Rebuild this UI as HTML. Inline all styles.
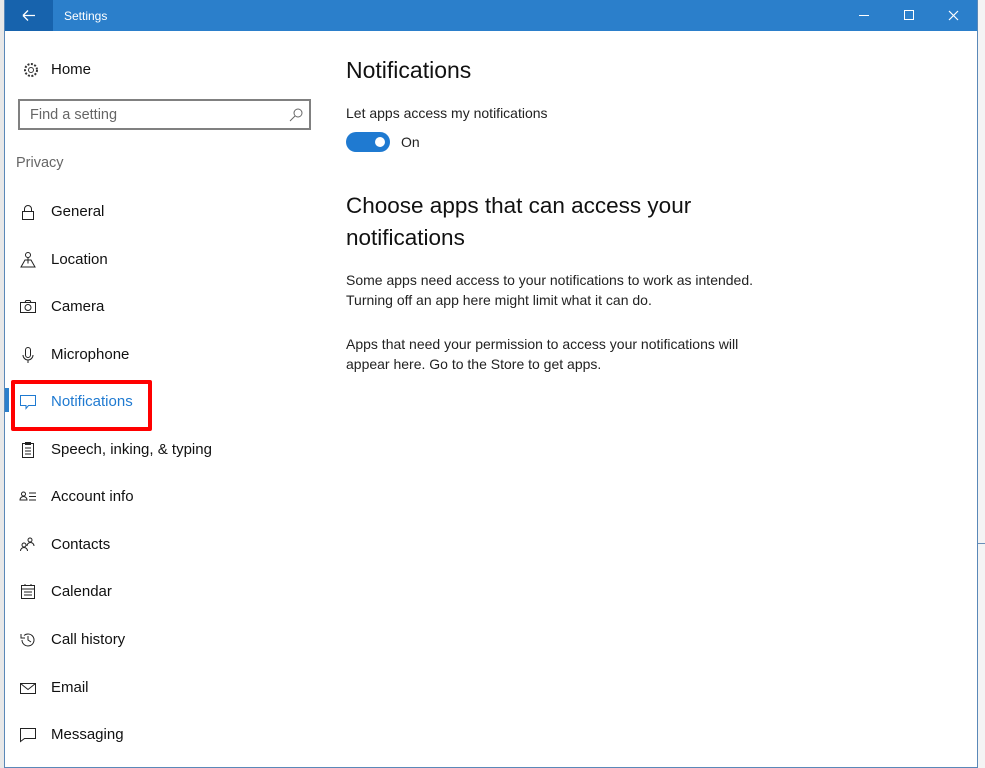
<!DOCTYPE html>
<html><head><meta charset="utf-8"><style>
*{margin:0;padding:0;box-sizing:border-box}
body{width:985px;height:768px;background:linear-gradient(90deg,#e8e8e8,#f4f4f4);font-family:"Liberation Sans",sans-serif;position:relative;overflow:hidden;color:#000}
.win{position:absolute;left:4px;top:0;width:974px;height:768px;background:#fff;border:1px solid #5a88b8;border-top:none}
.tb{position:absolute;left:0;top:0;width:100%;height:31px;background:#2b7fcb}
.back{position:absolute;left:0;top:0;width:48px;height:31px;background:#1763ad}
.tt{position:absolute;left:59px;top:9px;color:#fff;font-size:12px}
.nav{position:absolute;left:46px;font-size:15px;color:#111;margin-top:2px}
.ic{position:absolute;left:14px;width:18px;height:18px;margin-top:2px}
.t{position:absolute;font-size:14px;color:#222;line-height:20px}
</style></head><body>
<div class="win">
<div class="tb"><div class="back"><svg width="48" height="31"><path d="M18 15.5h12M18 15.5l5-5M18 15.5l5 5" stroke="#fff" stroke-width="1.3" fill="none"/></svg></div>
<div class="tt">Settings</div>
<svg style="position:absolute;left:845px;top:0" width="125" height="31"><path d="M9 15.5h10" stroke="#fff"/><rect x="54.5" y="10.5" width="9" height="9" stroke="#fff" fill="none"/><path d="M99 11l9 9M108 11l-9 9" stroke="#fff" stroke-width="1.2"/></svg>
</div>
<svg class="ic" style="top:59px;left:17px" viewBox="0 0 18 18"><circle cx="9" cy="9" r="2.5" fill="none" stroke="#333"/><circle cx="9" cy="9" r="6" fill="none" stroke="#333" stroke-dasharray="2 1.5" stroke-width="2"/></svg>
<div class="nav" style="top:59px">Home</div>
<div style="position:absolute;left:13px;top:99px;width:293px;height:31px;border:2px solid #808080"><span style="position:absolute;left:10px;top:6px;font-size:14.5px;color:#666">Find a setting</span><svg style="position:absolute;right:6px;top:7px" width="14" height="14"><circle cx="9" cy="5" r="4" fill="none" stroke="#666"/><path d="M6 8l-5 5" stroke="#666"/></svg></div>
<div style="position:absolute;left:11px;top:155px;font-size:14.5px;color:#666">Privacy</div>

<div class="nav" style="top:201px">General</div>
<svg class="ic" style="top:201px" viewBox="0 0 18 18"><rect x="3.5" y="8.5" width="11" height="8" fill="none" stroke="#222"/><path d="M5.5 8.5V6a3.5 3.5 0 0 1 7 0v2.5" fill="none" stroke="#222"/></svg>
<div class="nav" style="top:249px">Location</div>
<svg class="ic" style="top:249px" viewBox="0 0 18 18"><circle cx="9" cy="4" r="2.5" fill="none" stroke="#222"/><path d="M9 6.5v6M2 16l4-7h6l4 7z" fill="none" stroke="#222"/></svg>
<div class="nav" style="top:296px">Camera</div>
<svg class="ic" style="top:296px" viewBox="0 0 18 18"><rect x="1.5" y="4.5" width="15" height="10" fill="none" stroke="#222"/><circle cx="9" cy="9.5" r="3" fill="none" stroke="#222"/><path d="M6 4.5l1-2h4l1 2" fill="none" stroke="#222"/></svg>
<div class="nav" style="top:344px">Microphone</div>
<svg class="ic" style="top:344px" viewBox="0 0 18 18"><rect x="6.5" y="1.5" width="5" height="10" rx="2.5" fill="none" stroke="#222"/><path d="M4 9a5 5 0 0 0 10 0M9 14v3" fill="none" stroke="#222"/></svg>
<div style="position:absolute;left:0;top:388px;width:4px;height:24px;background:#2b7fcb"></div>
<div style="position:absolute;left:6px;top:380px;width:141px;height:51px;border:4px solid #f00;border-radius:2px"></div>
<div class="nav" style="top:391px;color:#1f7ad1">Notifications</div>
<svg class="ic" style="top:391px" viewBox="0 0 18 18"><path d="M1.5 2.5h15v10h-7l-2.5 3v-3h-5.5z" fill="none" stroke="#1f7ad1"/></svg>
<div class="nav" style="top:439px">Speech, inking, &amp; typing</div>
<svg class="ic" style="top:439px" viewBox="0 0 18 18"><rect x="3.5" y="2.5" width="11" height="14" fill="none" stroke="#222"/><path d="M6.5 1.5h5v2h-5zM6 7h6M6 10h6M6 13h6" fill="none" stroke="#222"/></svg>
<div class="nav" style="top:486px">Account info</div>
<svg class="ic" style="top:486px" viewBox="0 0 18 18"><circle cx="4.5" cy="6" r="2" fill="none" stroke="#222"/><path d="M1 12a3.5 3.5 0 0 1 7 0zM10 5h7M10 8.5h7M10 12h7" fill="none" stroke="#222"/></svg>
<div class="nav" style="top:534px">Contacts</div>
<svg class="ic" style="top:534px" viewBox="0 0 18 18"><circle cx="5" cy="9" r="2" fill="none" stroke="#222"/><path d="M1.5 15a3.5 3.5 0 0 1 7 0" fill="none" stroke="#222"/><circle cx="11" cy="4" r="2" fill="none" stroke="#222"/><path d="M8 10a3.5 3.5 0 0 1 7 0" fill="none" stroke="#222"/></svg>
<div class="nav" style="top:581px">Calendar</div>
<svg class="ic" style="top:581px" viewBox="0 0 18 18"><rect x="2.5" y="2.5" width="13" height="13" fill="none" stroke="#222"/><path d="M2.5 6h13M5 9h8M5 12h8M6 2.5V1M12 2.5V1" fill="none" stroke="#222"/></svg>
<div class="nav" style="top:629px">Call history</div>
<svg class="ic" style="top:629px" viewBox="0 0 18 18"><path d="M3 9a6 6 0 1 0 2-4.5M2 3v4h4M9 5v4l3 2" fill="none" stroke="#222"/></svg>
<div class="nav" style="top:677px">Email</div>
<svg class="ic" style="top:677px" viewBox="0 0 18 18"><rect x="1.5" y="4.5" width="15" height="10" fill="none" stroke="#222"/><path d="M1.5 4.5l7.5 6 7.5-6" fill="none" stroke="#222"/></svg>
<div class="nav" style="top:724px">Messaging</div>
<svg class="ic" style="top:724px" viewBox="0 0 18 18"><path d="M1.5 2.5h15v10h-11l-4 3z" fill="none" stroke="#222"/></svg>

<div style="position:absolute;left:341px;top:57px;font-size:23px;color:#111">Notifications</div>
<div class="t" style="left:341px;top:103px">Let apps access my notifications</div>
<div style="position:absolute;left:341px;top:132px;width:44px;height:20px;border-radius:10px;background:#1f7ad1"><div style="position:absolute;right:5px;top:5px;width:10px;height:10px;border-radius:5px;background:#fff"></div></div>
<div class="t" style="left:396px;top:132px">On</div>
<div style="position:absolute;left:341px;top:190px;font-size:22.5px;line-height:32px;color:#111">Choose apps that can access your<br>notifications</div>
<div class="t" style="left:341px;top:270px">Some apps need access to your notifications to work as intended.<br>Turning off an app here might limit what it can do.</div>
<div class="t" style="left:341px;top:334px">Apps that need your permission to access your notifications will<br>appear here. Go to the Store to get apps.</div>
</div>
<div style="position:absolute;left:978px;top:543px;width:7px;height:1px;background:#6a8fb8"></div>
</body></html>
